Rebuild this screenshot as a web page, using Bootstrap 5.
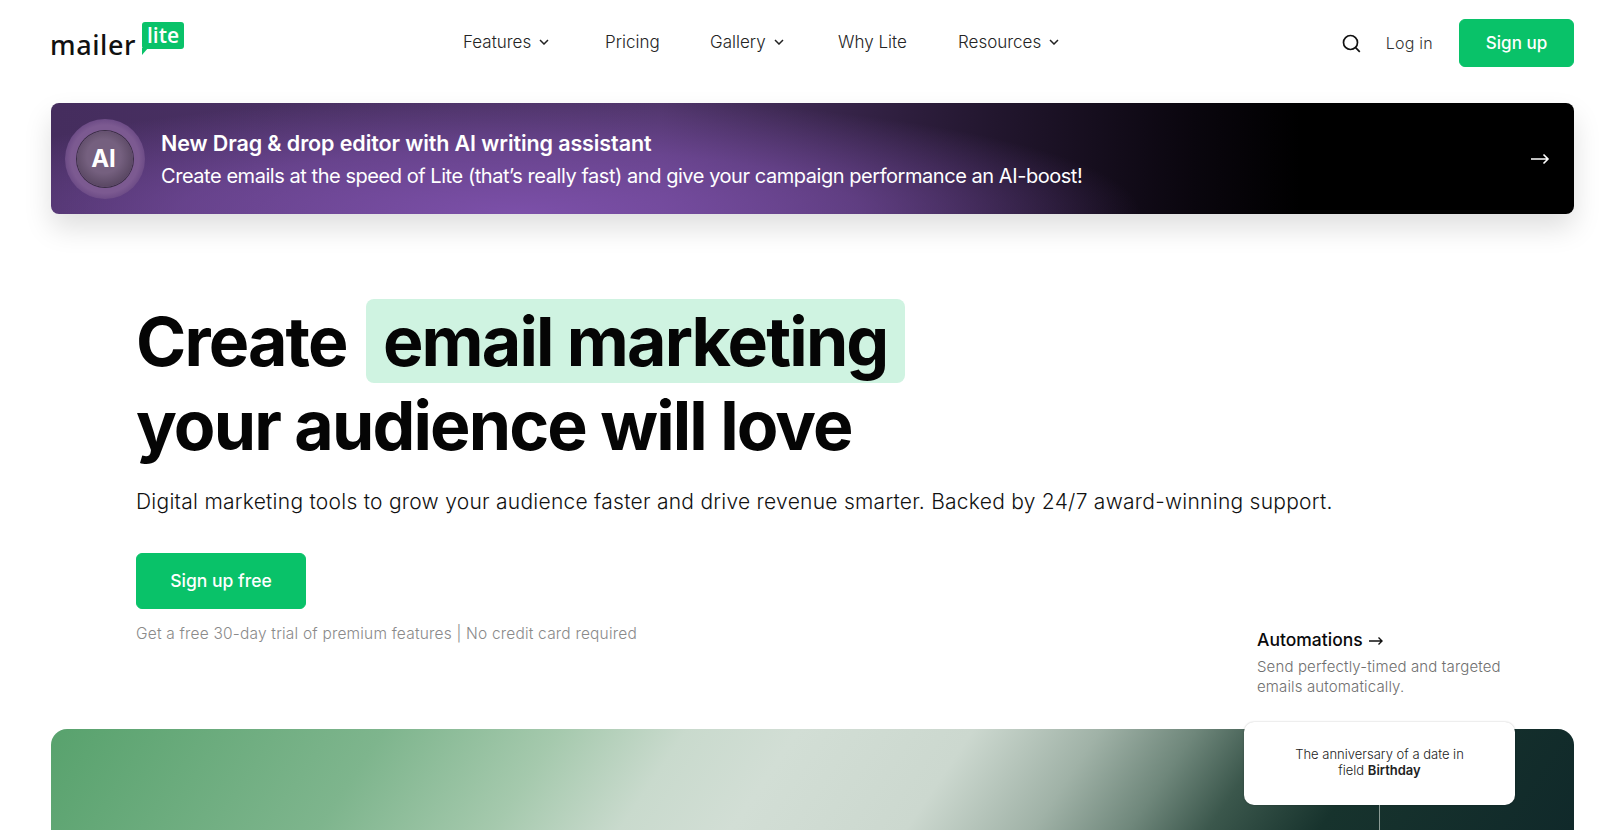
<!DOCTYPE html>
<html lang="en">
<head>
    <meta charset="UTF-8">
    <meta name="viewport" content="width=device-width, initial-scale=1.0">
    <title>MailerLite</title>
    <link href="https://cdn.jsdelivr.net/npm/bootstrap@5.3.0/dist/css/bootstrap.min.css" rel="stylesheet">
    <style>
        html, body { height: 830px; overflow: hidden; }
        body { font-family: Inter, "Liberation Sans", sans-serif; color: #09090b; background: #fff; }
        .site-head { height: 103px; padding: 19px 26px 0 51px; align-items: flex-start; }
        .logo-wrap { width: 132px; height: 36px; margin-top: 3px; position: relative; flex: none; }
        .logo-word { position: absolute; left: -1px; top: 7px; font: 500 27px/32px "Noto Sans", sans-serif; letter-spacing: .6px; color: #111; }
        .logo-tag { position: absolute; left: 91px; top: 0; width: 42px; height: 27px; background: #09c269; border-radius: 3px; color: #fff; font: 600 21px/26px "Open Sans", sans-serif; text-align: center; }
        .logo-tag::after { content: ""; position: absolute; left: 0; top: 26px; border-top: 7px solid #09c269; border-right: 6px solid transparent; }
        .main-links { position: absolute; left: 463px; top: 29px; gap: 0; }
        .main-links a { color: #242424; font-size: 17px; font-weight: 300; line-height: 24px; text-decoration: none; display: flex; align-items: center; }
        .main-links svg { margin-left: 8px; }
        .link-features { width: 142px; }
        .link-pricing { width: 105px; margin-top: 1px; }
        .link-gallery { width: 128px; }
        .link-why { width: 120px; margin-top: 1px; }
        .head-right { margin-left: auto; height: 48px; }
        .login-link { color: #333; font-weight: 300; font-size: 16px; text-decoration: none; margin: 0 26px 0 25px; letter-spacing: .25px; }
        .btn-lite { background: #09c269; border-color: #09c269; color: #fff; font-weight: 500; --bs-btn-hover-bg: #09b160; --bs-btn-hover-border-color: #09b160; --bs-btn-hover-color: #fff; }
        .btn-signup { width: 115px; height: 48px; border-radius: 6px; font-size: 17px; line-height: 34px; padding: 6px 0; }
        .ai-banner { margin: 0 26px 0 51px; height: 111px; border-radius: 8px; color: #fff; padding-left: 14px;
            background:
                radial-gradient(ellipse 620px 118px at 470px 111px, #7c50a9 0%, rgba(124,80,169,.6) 55%, rgba(124,80,169,0) 100%),
                linear-gradient(90deg, #452d5e 0%, #4e3468 40%, #22162e 62%, #0a060e 75%, #000 82%);
            box-shadow: 0 14px 28px rgba(0,0,0,.13); }
        .ai-badge { width: 80px; height: 80px; border-radius: 50%; flex: none; background: radial-gradient(circle, #7c5a91 0 60%, #6b4a85 72%, #5b3f7a 88%, rgba(91,63,122,.3) 100%); }
        .ai-badge span { width: 56px; height: 56px; border-radius: 50%; background: radial-gradient(circle at 48% 45%, #75607f 0 40%, #574560 75%, #3e3145 100%); font-weight: 700; font-size: 24px; box-shadow: 0 0 0 1px #3a2d44; padding-right: 3px; }
        .ai-copy { padding-top: 2px; }
        .ai-title { font-size: 21.5px; font-weight: 600; line-height: 32px; letter-spacing: -.1px; }
        .ai-sub { font-size: 20px; font-weight: 400; line-height: 32px; letter-spacing: -.45px; margin-top: 1px; }
        .ai-arrow { margin: 0 24px 0 auto; }
        .hero-area { height: 515px; padding: 85px 0 0 136px; position: relative; }
        .hero-title { font-size: 68px; font-weight: 700; line-height: 84px; letter-spacing: -1.85px; margin: 0; color: #050505; }
        .hl-mark { display: inline-block; background: #cff3e1; border-radius: 8px; padding: 0 17px; margin-left: 5px; height: 84px; }
        .hero-lead { font-size: 21px; font-weight: 300; line-height: 32px; margin: 19px 0 0; letter-spacing: .26px; color: #111; }
        .btn-free { width: 170px; height: 56px; margin-top: 35px; border-radius: 6px; font-size: 17.5px; line-height: 42px; padding: 6px 0; }
        .trial-note { font-size: 15.5px; font-weight: 300; color: #8a8a8a; margin: 13px 0 0; line-height: 24px; letter-spacing: .19px; }
        .auto-box { position: absolute; left: 1257px; top: 414px; width: 275px; }
        .auto-title { font-size: 17.5px; font-weight: 500; line-height: 24px; color: #09090b; }
        .auto-title svg { margin-left: 1px; }
        .auto-text { font-size: 15px; font-weight: 300; line-height: 20px; letter-spacing: .14px; color: #6f6f6f; margin: 5px 0 0; }
        .demo-panel { margin: 0 26px 0 51px; height: 101px; border-radius: 16px 16px 0 0; position: relative;
            background: linear-gradient(124deg, #58a26d 0%, #7eb58d 21%, #a5c9ad 32%, #c9dacd 40%, #d2ded5 47%, #ccd8cf 58%, #a0b2a7 66%, #6f877b 72%, #3b574c 77%, #17332d 84%, #10292a 100%); }
        .date-card { position: absolute; left: 1193px; top: -7px; width: 271px; height: 83px; background: #fff; border-radius: 10px; font-size: 13px; line-height: 16px; font-weight: 300; text-align: center; padding-top: 24px; box-shadow: 0 0 2px rgba(0,0,0,.25); color: #222; }
        .date-card b { font-weight: 600; }
        .card-stem { position: absolute; left: 1328px; top: 76px; width: 1px; height: 25px; background: #8b9b95; }
    </style>
</head>
<body>
    <header class="site-head d-flex position-relative">
        <a href="#" class="logo-wrap text-decoration-none">
            <span class="logo-word">mailer</span>
            <span class="logo-tag">lite</span>
        </a>
        <nav class="main-links d-flex">
            <a href="#" class="link-features">Features
                <svg width="10" height="6" viewBox="0 0 10 6" fill="none" stroke="#222" stroke-width="1.5"><path d="M1 1l4 4 4-4"/></svg></a>
            <a href="#" class="link-pricing">Pricing</a>
            <a href="#" class="link-gallery">Gallery
                <svg width="10" height="6" viewBox="0 0 10 6" fill="none" stroke="#222" stroke-width="1.5"><path d="M1 1l4 4 4-4"/></svg></a>
            <a href="#" class="link-why">Why Lite</a>
            <a href="#">Resources
                <svg width="10" height="6" viewBox="0 0 10 6" fill="none" stroke="#222" stroke-width="1.5"><path d="M1 1l4 4 4-4"/></svg></a>
        </nav>
        <div class="head-right d-flex align-items-center">
            <svg width="19" height="19" viewBox="0 0 19 19" fill="none" stroke="#111" stroke-width="1.7"><circle cx="8.5" cy="8.5" r="7"/><path d="M13.6 13.6l4.2 4.2"/></svg>
            <a href="#" class="login-link">Log in</a>
            <a href="#" class="btn btn-lite btn-signup">Sign up</a>
        </div>
    </header>

    <a href="#" class="ai-banner d-flex align-items-center text-decoration-none text-white">
        <div class="ai-badge d-flex align-items-center justify-content-center me-3">
            <span class="d-flex align-items-center justify-content-center">AI</span>
        </div>
        <div class="ai-copy">
            <div class="ai-title">New Drag &amp; drop editor with AI writing assistant</div>
            <div class="ai-sub">Create emails at the speed of Lite (that’s really fast) and give your campaign performance an AI-boost!</div>
        </div>
        <svg class="ai-arrow" width="20" height="12" viewBox="0 0 20 12" fill="none" stroke="#fff" stroke-width="1.6"><path d="M1 6h17M13.5 1.5L18 6l-4.5 4.5"/></svg>
    </a>

    <section class="hero-area">
        <h1 class="hero-title">Create <span class="hl-mark">email marketing</span><br>your audience will love</h1>
        <p class="hero-lead">Digital marketing tools to grow your audience faster and drive revenue smarter. Backed by 24/7 award-winning support.</p>
        <a href="#" class="btn btn-lite btn-free">Sign up free</a>
        <p class="trial-note">Get a free 30-day trial of premium features | No credit card required</p>
        <div class="auto-box">
            <div class="auto-title">Automations
                <svg width="16" height="10" viewBox="0 0 16 10" fill="none" stroke="#111" stroke-width="1.4"><path d="M1 5h13M10.5 1.5L14 5l-3.5 3.5"/></svg>
            </div>
            <p class="auto-text">Send perfectly-timed and targeted emails automatically.</p>
        </div>
    </section>

    <div class="demo-panel">
        <div class="date-card">The anniversary of a date in<br>field <b>Birthday</b></div>
        <div class="card-stem"></div>
    </div>

    <script src="https://cdn.jsdelivr.net/npm/bootstrap@5.3.0/dist/js/bootstrap.bundle.min.js"></script>
</body>
</html>
